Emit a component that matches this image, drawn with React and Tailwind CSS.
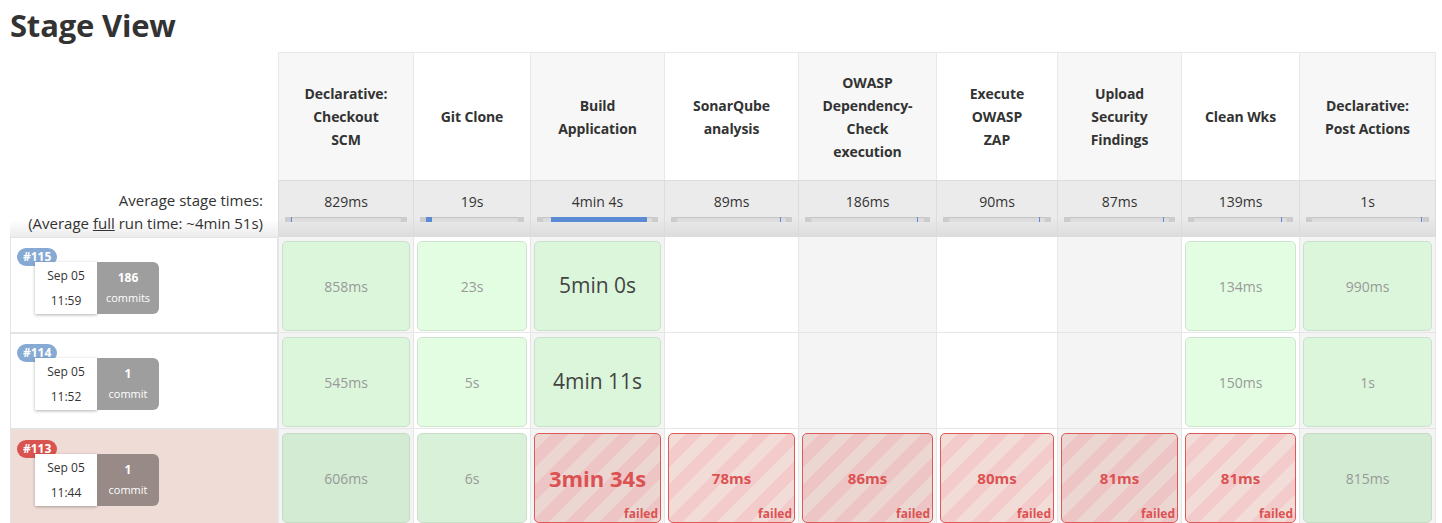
import React from 'react'

const stages = [
  { name: ['Declarative:', 'Checkout', 'SCM'], avg: '829ms', bar: { left: '0%', width: '1px' } },
  { name: ['Git Clone'], avg: '19s', bar: { left: '0%', width: '6px' } },
  { name: ['Build', 'Application'], avg: '4min 4s', bar: { left: '7%', width: '88%' } },
  { name: ['SonarQube', 'analysis'], avg: '89ms', bar: { right: '5%', width: '1px' } },
  { name: ['OWASP', 'Dependency-', 'Check', 'execution'], avg: '186ms', bar: { right: '5%', width: '1px' } },
  { name: ['Execute', 'OWASP', 'ZAP'], avg: '90ms', bar: { right: '5%', width: '1px' } },
  { name: ['Upload', 'Security', 'Findings'], avg: '87ms', bar: { right: '5%', width: '1px' } },
  { name: ['Clean Wks'], avg: '139ms', bar: { right: '5%', width: '1px' } },
  { name: ['Declarative:', 'Post Actions'], avg: '1s', bar: { right: '1%', width: '1px' } },
]

const builds = [
  {
    id: '#115', date: 'Sep 05', time: '11:59', commits: '186', label: 'commits', failed: false,
    cells: [['858ms'], ['23s'], ['5min 0s', 'long'], null, null, null, null, ['134ms'], ['990ms']],
  },
  {
    id: '#114', date: 'Sep 05', time: '11:52', commits: '1', label: 'commit', failed: false,
    cells: [['545ms'], ['5s'], ['4min 11s', 'long'], null, null, null, null, ['150ms'], ['1s']],
  },
  {
    id: '#113', date: 'Sep 05', time: '11:44', commits: '1', label: 'commit', failed: true,
    cells: [['606ms'], ['6s'], ['3min 34s', 'fail-long'], ['78ms', 'fail'], ['86ms', 'fail'], ['80ms', 'fail'], ['81ms', 'fail'], ['81ms', 'fail'], ['815ms']],
  },
]

const StageCell = ({ cell, odd, failedRow }) => {
  if (!cell) return <div className="h-[90px]" />
  const [text, kind] = cell
  if (kind === 'fail' || kind === 'fail-long') {
    return (
      <div
        className={
          'relative h-[90px] rounded-[5px] border border-[#dc5a58] flex items-center justify-center font-bold text-[#dc5252] ' +
          (odd
            ? 'bg-[repeating-linear-gradient(135deg,#ebd6d2_0px,#ebd6d2_12px,#edc5c5_12px,#edc5c5_24px)]'
            : 'bg-[repeating-linear-gradient(135deg,#f2dcd8_0px,#f2dcd8_12px,#f4cbcb_12px,#f4cbcb_24px)]') +
          (kind === 'fail-long' ? ' text-[22px]' : ' text-[15px]')
        }
      >
        {text}
        <span className="absolute right-[2px] bottom-[1px] text-[12px] leading-[14px]">failed</span>
      </div>
    )
  }
  const green = failedRow
    ? odd ? 'bg-[#d2ebd2] border-[#c4dcc4]' : 'bg-[#d8f1d8] border-[#c8e0c8]'
    : odd ? 'bg-[#dcf6dc] border-[#c9e1c9]' : 'bg-[#e3fde3] border-[#cde5cd]'
  return (
    <div
      className={
        'h-[90px] rounded-[5px] border flex items-center justify-center ' + green +
        (kind === 'long' ? ' text-[21px] text-[#444]' : ' text-[14px] text-[#999]')
      }
    >
      {text}
    </div>
  )
}

const BuildInfo = ({ b }) => (
  <div className={'h-[96px] border border-[#e3e3e3] ' + (b.failed ? 'bg-[#f0dcd7]' : 'bg-white')}>
    <div className="flex pl-[6px] pt-[10px]">
      <span
        className={
          'h-[18px] px-[6px] rounded-full text-white font-bold text-[12px] leading-[18px] ' +
          (b.failed ? 'bg-[#d9534f]' : 'bg-[#87aad4]')
        }
      >
        {b.id}
      </span>
    </div>
    <div className="flex ml-[24px] -mt-[4px]">
      <div className="w-[62px] h-[52px] bg-white shadow-[0_1px_3px_rgba(0,0,0,0.3)] flex flex-col items-center justify-center text-[12px] leading-[25px] text-[#333]">
        <span>{b.date}</span>
        <span>{b.time}</span>
      </div>
      <div
        className={
          'w-[62px] h-[52px] rounded-r-[6px] flex flex-col items-center justify-center text-white text-[11px] leading-[20px] ' +
          (b.failed ? 'bg-[#978a87]' : 'bg-[#9e9e9e]')
        }
      >
        <span className="font-bold text-[12px]">{b.commits}</span>
        <span>{b.label}</span>
      </div>
    </div>
  </div>
)

export default function App() {
  return (
    <div className="w-[1442px] h-[523px] overflow-hidden bg-white text-[#333] font-['Open_Sans','Noto_Sans',sans-serif]">
      <h2 className="pl-[10px] pt-[3px] text-[31px] font-bold leading-[45px] tracking-[-0.2px]">Stage View</h2>
      <div className="ml-[10px] mt-[4px] grid grid-cols-[268px_135px_117px_134px_134px_138px_121px_124px_118px_137px]">
        {/* header */}
        <div className="h-[128px]" />
        {stages.map((s, i) => (
          <div
            key={s.avg}
            className={
              'h-[128px] border-t border-l border-[#e8e8e8] flex flex-col items-center justify-center text-center font-bold text-[14px] leading-[23px] text-[#333] tracking-[-0.1px] ' +
              (i % 2 === 0 ? 'bg-[#f7f7f7]' : 'bg-white') +
              (i === stages.length - 1 ? ' border-r' : '')
            }
          >
            {s.name.map((line) => (
              <span key={line}>{line}</span>
            ))}
          </div>
        ))}

        {/* averages */}
        <div className="h-[57px] bg-gradient-to-b from-white from-70% to-[#ececec] text-right pr-[15px] pt-[9px] text-[15px] leading-[23px]">
          <div>Average stage times:</div>
          <div>
            (Average <span className="underline">full</span> run time: ~4min 51s)
          </div>
        </div>
        {stages.map((s, i) => (
          <div
            key={s.avg}
            className={
              'h-[57px] border-l border-t border-[#dcdcdc] bg-gradient-to-b from-[#ebebeb] from-65% to-[#dcdcdc] px-[6px] pt-[9px] ' +
              (i === stages.length - 1 ? 'border-r' : '')
            }
          >
            <div className="text-center text-[14px] leading-[23px] text-[#333]">{s.avg}</div>
            <div className="relative mt-[4px] h-[5px] bg-[#dddddd] border-x-[6px] border-[#cccccc] shadow-[inset_0_1px_1px_rgba(0,0,0,0.12)]">
              <div className="absolute top-0 bottom-0 bg-[#5b8bd4]" style={s.bar} />
            </div>
          </div>
        ))}

        {/* builds */}
        {builds.map((b) => (
          <React.Fragment key={b.id}>
            <BuildInfo b={b} />
            {b.cells.map((c, i) => (
              <div
                key={i}
                className={
                  'h-[96px] px-[3px] pt-[4px] pb-[2px] border-l border-b border-[#e6e6e6] ' +
                  (i % 2 === 0 ? 'bg-[#f4f4f4]' : 'bg-white') +
                  (i === b.cells.length - 1 ? ' border-r' : '')
                }
              >
                <StageCell cell={c} odd={i % 2 === 0} failedRow={b.failed} />
              </div>
            ))}
          </React.Fragment>
        ))}
      </div>
    </div>
  )
}
